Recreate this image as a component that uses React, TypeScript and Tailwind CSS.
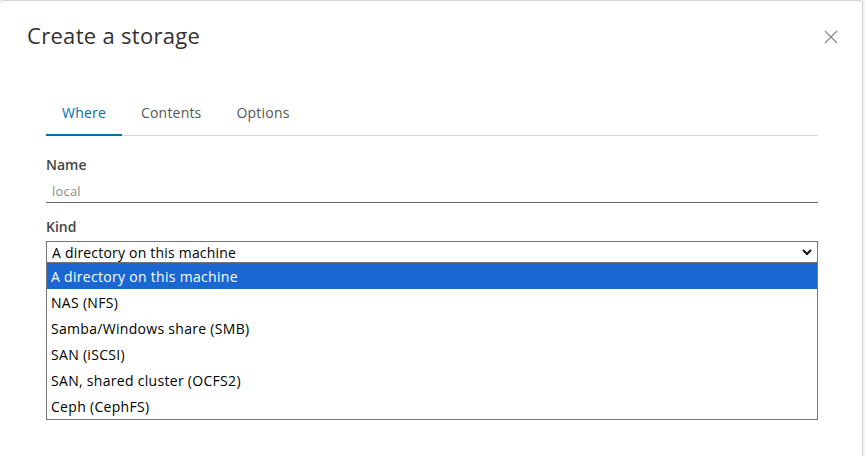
import React from "react";

const font = { fontFamily: '"Open Sans", "Noto Sans", sans-serif' };

export default function App() {
  const options = [
    "A directory on this machine",
    "NAS (NFS)",
    "Samba/Windows share (SMB)",
    "SAN (iSCSI)",
    "SAN, shared cluster (OCFS2)",
    "Ceph (CephFS)",
  ];
  return (
    <div className="w-[865px] h-[456px] bg-[#f4f4f4] overflow-hidden flex" style={font}>
      <div className="w-[863px] h-[470px] bg-white border-t border-r border-[#d4d4d4] rounded-tr-[4px] rounded-tl-[4px] flex flex-col">
        <div className="flex items-start justify-between pl-[27px] pr-[24px] pt-[20px]">
          <h1 className="text-[22px] leading-[28px] text-[#313131] tracking-[0.3px]">Create a storage</h1>
          <svg width="14" height="14" viewBox="0 0 14 14" className="mt-[9px]">
            <path d="M1 1 L13 13 M13 1 L1 13" stroke="#8a8a8a" strokeWidth="1.3" fill="none" />
          </svg>
        </div>
        <div className="pl-[46px] pr-[44px] mt-[50px]">
          <div className="flex border-b border-[#d9d9d9] h-[37px] text-[14px] leading-[20px] gap-[3px] tracking-[0.2px]">
            <div className="px-4 pt-[4px] text-[#0072a3] border-b-2 border-[#0072a3] -mb-px">Where</div>
            <div className="px-4 pt-[4px] text-[#565656]">Contents</div>
            <div className="px-4 pt-[4px] text-[#565656]">Options</div>
          </div>
          <div className="mt-[19px] text-[14px] leading-[20px] font-semibold text-[#454545]">Name</div>
          <div className="mt-[4px] h-[24px] border-b border-[#6a6a6a] flex items-center pt-[3px] pl-[6px] text-[13px] text-[#8c8c8c] tracking-[0.2px]">local</div>
          <div className="mt-[14px] text-[14px] leading-[20px] font-semibold text-[#454545]">Kind</div>
          <div className="mt-[4px] h-[22px] border border-[#767676] flex items-center justify-between pl-[5px] pr-[4px] text-[14px] text-black tracking-[0.2px]">
            <span>A directory on this machine</span>
            <svg width="12" height="12" viewBox="0 0 12 12">
              <path d="M2 4 L6 8 L10 4" stroke="#111" strokeWidth="2" fill="none" />
            </svg>
          </div>
          <div className="border border-[#767676] border-t-0 flex flex-col text-[14px] tracking-[0.3px]">
            {options.map((o, i) => (
              <div
                key={o}
                className={
                  i === 0
                    ? "h-[26px] flex items-center pl-[4px] bg-[#1a67d2] text-white"
                    : "h-[26px] flex items-center pl-[4px] text-black"
                }
              >
                {o}
              </div>
            ))}
          </div>
        </div>
      </div>
    </div>
  );
}
